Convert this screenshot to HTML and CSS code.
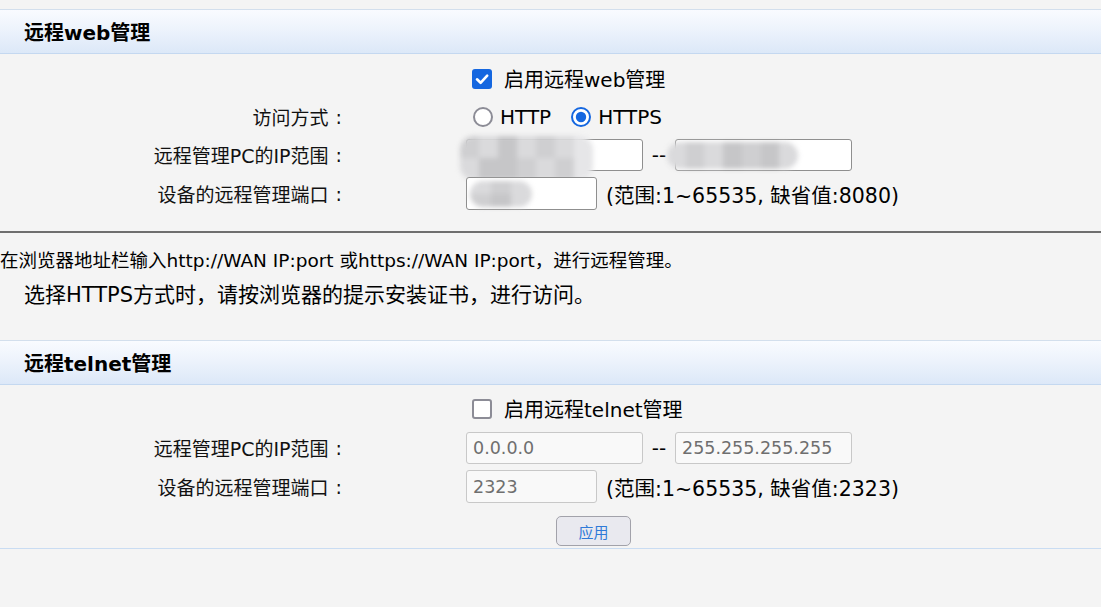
FILE: index.html
```html
<!DOCTYPE html>
<html lang="zh-CN">
<head>
<meta charset="utf-8">
<title>远程管理</title>
<link rel="stylesheet" href="styles.css">
</head>
<body>
<div class="band band-first"><h2>远程web管理</h2></div>
<div class="form form-web">
  <div class="ctl ctl-only">
    <label class="chk"><span class="box box-on"><svg viewBox="0 0 20 20" width="20" height="20"><path d="M5 10.3 L8.6 13.8 L15.2 6.6" fill="none" stroke="#fff" stroke-width="2.6" stroke-linecap="round" stroke-linejoin="round"/></svg></span><span class="chk-text">启用远程web管理</span></label>
  </div>
  <div class="lbl">访问方式<span class="colon">:</span></div>
  <div class="ctl">
    <label class="rad"><svg viewBox="0 0 20 20" width="20" height="20"><circle cx="10" cy="10" r="9" fill="#fff" stroke="#8c8c96" stroke-width="2"/></svg><span>HTTP</span></label>
    <label class="rad rad-2"><svg viewBox="0 0 20 20" width="20" height="20"><circle cx="10" cy="10" r="9" fill="#fff" stroke="#1567e0" stroke-width="2"/><circle cx="10" cy="10" r="5.2" fill="#1567e0"/></svg><span>HTTPS</span></label>
  </div>
  <div class="lbl">远程管理PC的IP范围<span class="colon">:</span></div>
  <div class="ctl">
    <span class="field">
      <input class="inp inp-ip" type="text" value="">
      <span class="mask mask-a"><i class="c2"></i><i class="c1"></i><i class="c3"></i><i class="c1"></i><i class="c2"></i><i class="c1"></i><i class="c0"></i><i class="c1"></i><i class="c3"></i><i class="c3"></i><i class="c2"></i><i class="c1"></i><i class="c2"></i><i class="c0"></i></span>
    </span>
    <span class="sep">--</span>
    <span class="field">
      <input class="inp inp-ip" type="text" value="">
      <span class="mask mask-b"><i class="c1"></i><i class="c2"></i><i class="c1"></i><i class="c3"></i><i class="c2"></i><i class="c3"></i><i class="c1"></i></span>
    </span>
  </div>
  <div class="lbl">设备的远程管理端口<span class="colon">:</span></div>
  <div class="ctl">
    <span class="field">
      <input class="inp inp-port" type="text" value="">
      <span class="mask mask-c"><i class="c1"></i><i class="c2"></i><i class="c1"></i><i class="c2"></i><i class="c3"></i><i class="c1"></i></span>
    </span>
    <span class="hint">(范围:1~65535, 缺省值:8080)</span>
  </div>
</div>
<div class="rule"></div>
<p class="note note-1">在浏览器地址栏输入http://WAN IP:port 或https://WAN IP:port，进行远程管理。</p>
<p class="note note-2">选择HTTPS方式时，请按浏览器的提示安装证书，进行访问。</p>
<div class="band"><h2>远程telnet管理</h2></div>
<div class="form form-telnet">
  <div class="ctl ctl-only">
    <label class="chk"><span class="box"></span><span class="chk-text">启用远程telnet管理</span></label>
  </div>
  <div class="lbl">远程管理PC的IP范围<span class="colon">:</span></div>
  <div class="ctl">
    <input class="inp inp-ip inp-dis" type="text" value="0.0.0.0" disabled>
    <span class="sep">--</span>
    <input class="inp inp-ip inp-dis" type="text" value="255.255.255.255" disabled>
  </div>
  <div class="lbl">设备的远程管理端口<span class="colon">:</span></div>
  <div class="ctl">
    <input class="inp inp-port inp-dis" type="text" value="2323" disabled>
    <span class="hint">(范围:1~65535, 缺省值:2323)</span>
  </div>
  <div class="ctl ctl-only ctl-btn">
    <button class="btn" type="button">应用</button>
  </div>
</div>
</body>
</html>
```

FILE: styles.css
```css
* {
  box-sizing: border-box;
}

body {
  margin: 0;
  background: #f4f4f4;
  font-family: "DejaVu Sans", "Noto Sans CJK SC", sans-serif;
  color: #000;
}

.band {
  height: 45px;
  border-top: 1px solid #d3dfed;
  border-bottom: 1px solid #c4d8f0;
  background: linear-gradient(#f9fbff 0%, #edf3fc 45%, #dce8f8 100%);
  display: flex;
  align-items: center;
  padding-left: 24px;
}

.band-first {
  margin-top: 9px;
}

.band h2 {
  margin: 0;
  font-size: 20px;
  font-weight: bold;
}

.form {
  display: grid;
  grid-template-columns: 342px 1fr;
  column-gap: 124px;
  padding-top: 5px;
}

.form-web {
  grid-template-rows: 39px 37px 39px 39px;
}

.form-telnet {
  padding-top: 4px;
  grid-template-rows: 39px 39px 39px auto;
  padding-bottom: 2px;
  border-bottom: 1px solid #c9dcf2;
}

.lbl {
  font-size: 19px;
  display: flex;
  align-items: center;
  justify-content: flex-end;
  white-space: nowrap;
  color: #111;
}

.colon {
  margin-left: 7px;
}

.ctl {
  display: flex;
  align-items: center;
  font-size: 20px;
  white-space: nowrap;
}

.ctl-only {
  grid-column: 2;
}

.chk {
  display: flex;
  align-items: center;
  margin-left: 6px;
}

.box {
  width: 20px;
  height: 20px;
  border: 2px solid #8c8c96;
  border-radius: 3px;
  background: #fff;
  display: block;
  margin-right: 12px;
}

.box-on {
  border: none;
  background: #1567e0;
}

.box svg {
  display: block;
}

.rad {
  display: flex;
  align-items: center;
  margin-left: 7px;
}

.rad svg {
  display: block;
  margin-right: 7px;
}

.rad-2 {
  margin-left: 20px;
}

.field {
  position: relative;
  display: block;
}

.inp {
  display: block;
  height: 32px;
  border: 1px solid #8f8f8f;
  border-radius: 3px;
  background: #fff;
  font-family: "DejaVu Sans", sans-serif;
  font-size: 17.5px;
  padding: 0 0 0 6px;
  margin: 0;
  outline: none;
}

.inp-ip {
  width: 177px;
}

.inp-port {
  width: 131px;
  height: 33px;
}

.inp-dis {
  background: #f9f9f9;
  border-color: #c8c8c8;
  color: #6f6f6f;
}

.sep {
  width: 32px;
  text-align: center;
}

.hint {
  margin-left: 9px;
  font-size: 20.5px;
}

.mask {
  position: absolute;
  display: grid;
  filter: blur(2.5px);
  border-radius: 14px;
  overflow: hidden;
}

.mask i {
  display: block;
}

.mask .c0 { background: #e6e6e8; }
.mask .c1 { background: #dadadc; }
.mask .c2 { background: #cfcfd1; }
.mask .c3 { background: #c6c6c8; }

.mask-a {
  left: -6px;
  top: -3px;
  width: 133px;
  height: 44px;
  grid-template-columns: repeat(7, 1fr);
}

.mask-b {
  left: -8px;
  top: 3px;
  width: 131px;
  height: 27px;
  grid-template-columns: repeat(7, 1fr);
}

.mask-c {
  left: 4px;
  top: 4px;
  width: 62px;
  height: 26px;
  grid-template-columns: repeat(3, 1fr);
}

.rule {
  height: 2px;
  background: #6e6e6e;
  margin-top: 18px;
}

.note {
  margin: 0;
  line-height: 35px;
  white-space: nowrap;
}

.note-1 {
  margin-top: 10px;
  font-size: 18.5px;
}

.note-2 {
  padding-left: 24px;
  font-size: 21px;
  margin-bottom: 27px;
}

.ctl-btn {
  padding-top: 10px;
}

.btn {
  margin-left: 90px;
  width: 75px;
  height: 30px;
  border: 1px solid #a2a2aa;
  border-radius: 5px;
  background: #e9e9ef;
  color: #2f7ad8;
  font-family: "Noto Sans CJK SC", sans-serif;
  font-size: 15px;
  padding: 0;
}
```
